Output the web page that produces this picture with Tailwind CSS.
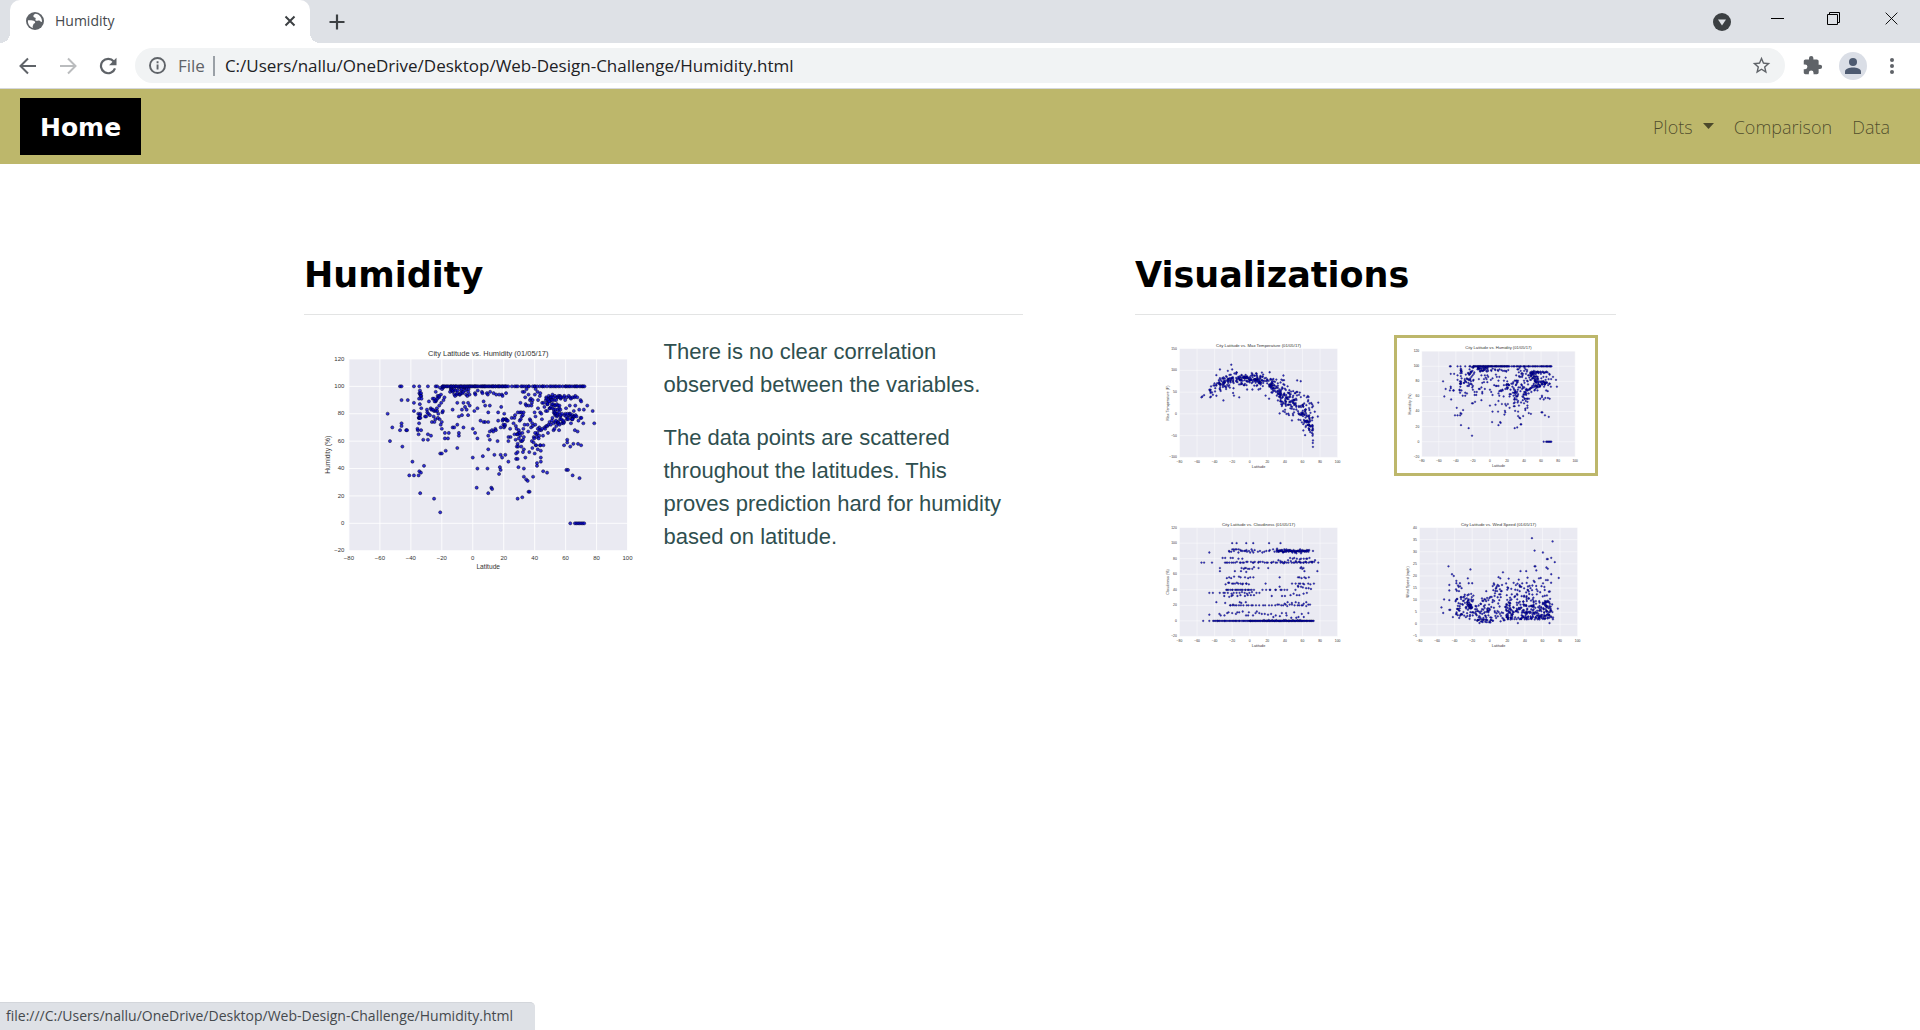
<!DOCTYPE html>
<html lang="en">
<head>
<meta charset="utf-8">
<title>Humidity</title>
<script src="https://cdn.jsdelivr.net/npm/@tailwindcss/browser@4"></script>
</head>
<body class="flex min-h-screen flex-col bg-white font-['Open_Sans','Noto_Sans',sans-serif]">

<!-- Tab strip -->
<div class="flex h-[43px] bg-[#dee1e6] pl-[10px]">
  <div class="relative flex w-[300px] items-center rounded-t-[10px] bg-white pr-[14px] pb-[2px] pl-4 text-[14px] text-[#45494d]">
    <span class="absolute bottom-0 -left-[10px] size-[10px] bg-[radial-gradient(circle_at_0_0,#dee1e6_10px,white_10px)]"></span>
    <span class="absolute -right-[10px] bottom-0 size-[10px] bg-[radial-gradient(circle_at_100%_0,#dee1e6_10px,white_10px)]"></span>
    <svg class="size-[18px]" viewBox="0 0 18 18"><circle cx="9" cy="9" r="9" fill="#5f6368"/><path fill="#fff" d="M9.5 1.7C8 2.500 7 3.300 7.500 4.800C7.800 5.800 9.500 5.200 9.700 6.300C9.900 7.200 9 7.600 9.600 8.500C10.300 9.300 11.800 8.200 13 8.500C14.500 8.900 14.500 10.300 16 9.800C16.300 6 13.500 2 9.500 1.700ZM2 8.300C4 8.200 7.500 8.200 8.600 9.200C9.700 10 9.200 11.300 8 11.500C7 11.700 7.600 13.300 6.700 14C6.500 14.800 6.700 15.500 7 16C3.800 15.200 1.400 11.900 2 8.300Z"/></svg>
    <span class="ml-[11px] grow">Humidity</span>
    <button aria-label="Close tab"><svg class="size-3" viewBox="0 0 12 12" fill="none" stroke="#3c4043" stroke-width="2"><path d="M1.500 1.500l9 9M10.500 1.500l-9 9"/></svg></button>
  </div>
  <button class="ml-[19px]" aria-label="New tab"><svg class="size-4" viewBox="0 0 16 16" fill="none" stroke="#3c4043" stroke-width="2.200"><path d="M8 .5v15M.5 8h15"/></svg></button>
  <div class="ml-auto flex pr-[22px]">
    <button aria-label="Search tabs"><svg class="size-[18px]" viewBox="0 0 18 18"><circle cx="9" cy="9" r="9" fill="#3c4043"/><path d="M5 6.500h8l-4 6z" fill="#dee1e6"/></svg></button>
    <button class="mb-[6px] ml-10" aria-label="Minimize"><svg class="size-[13px]" viewBox="0 0 13 13"><path d="M0 6h13v1H0z"/></svg></button>
    <button class="mb-[6px] ml-[43px]" aria-label="Restore"><svg class="size-[13px]" viewBox="0 0 13 13" fill="none" stroke="#000"><path d="M.5 2.500h10v10H.5zM2.500 2.500v-2h10v10h-2"/></svg></button>
    <button class="mb-[6px] ml-[45px]" aria-label="Close"><svg class="size-[13px]" viewBox="0 0 14 14" fill="none" stroke="#000"><path d="M.7 .7l12.600 12.600M13.300 .7L.7 13.300"/></svg></button>
  </div>
</div>

<!-- Toolbar -->
<div class="flex h-[46px] items-center border-b border-[#d5d7db] pr-[25px] pl-[19px]">
  <button aria-label="Back"><svg class="size-[18px]" viewBox="0 0 18 18" fill="none" stroke="#5f6368" stroke-width="2"><path d="M17 9H2M9 1.500L1.500 9L9 16.500"/></svg></button>
  <button class="ml-[22px]" aria-label="Forward"><svg class="size-[18px]" viewBox="0 0 18 18" fill="none" stroke="#babcbe" stroke-width="2"><path d="M1 9h15M9 1.500L16.500 9L9 16.500"/></svg></button>
  <button class="ml-[22px]" aria-label="Reload"><svg class="size-[18px]" viewBox="0 0 18 18"><path d="M14.800 4.500A7.200 7.200 0 1 0 16 11.300" fill="none" stroke="#5f6368" stroke-width="2.200"/><path d="M17.500 .8v7.400h-7.400z" fill="#5f6368"/></svg></button>
  <div class="ml-[18px] flex h-[35px] grow items-center rounded-full bg-[#f1f3f4] pr-[13px] pl-[14px] text-[17px]">
    <svg class="size-[17px] shrink-0" viewBox="0 0 17 17"><circle cx="8.500" cy="8.500" r="7.500" fill="none" stroke="#5f6368" stroke-width="1.900"/><path d="M7.600 7.500h1.900v5H7.600zM7.600 4.300h1.900v1.900H7.600z" fill="#5f6368"/></svg>
    <span class="ml-3 text-[#5f6368]">File</span>
    <span class="ml-2 h-5 w-[2px] bg-[#9aa0a6]"></span>
    <input aria-label="Address" class="ml-[10px] min-w-0 grow bg-transparent text-[#202124] outline-none" value="C:/Users/nallu/OneDrive/Desktop/Web-Design-Challenge/Humidity.html">
    <button aria-label="Bookmark"><svg class="size-[21px]" viewBox="0 0 24 24" fill="#5f6368"><path d="M22 9.240l-7.190-.62L12 2 9.190 8.630 2 9.240l5.460 4.730L5.820 21 12 17.270 18.180 21l-1.630-7.030L22 9.240zM12 15.400l-3.760 2.270 1-4.280-3.320-2.880 4.380-.38L12 6.100l1.710 4.040 4.380.38-3.320 2.880 1 4.280L12 15.400z"/></svg></button>
  </div>
  <button class="ml-[17px]" aria-label="Extensions"><svg class="size-[21px]" viewBox="0 0 24 24" fill="#5f6368"><path d="M20.500 11H19V7c0-1.100-.9-2-2-2h-4V3.500a2.500 2.500 0 0 0-5 0V5H4c-1.100 0-1.990.9-1.990 2v3.800H3.500a2.700 2.700 0 0 1 0 5.400H2V20c0 1.100.9 2 2 2h3.800v-1.500a2.700 2.700 0 0 1 5.400 0V22H17c1.100 0 2-.9 2-2v-4h1.500a2.500 2.500 0 0 0 0-5z"/></svg></button>
  <button class="ml-4 flex size-7 items-end justify-center rounded-full bg-[#dadee6] pb-[6px]" aria-label="Profile"><svg class="size-4" viewBox="0 0 16 16" fill="#4d5a70"><circle cx="8" cy="4" r="4"/><path d="M0 16v-2.500C0 10.800 4.500 9.500 8 9.500s8 1.300 8 4V16z"/></svg></button>
  <button class="ml-[22px]" aria-label="Menu"><svg class="h-[18px] w-[6px]" viewBox="0 0 6 18" fill="#5f6368"><circle cx="3" cy="3" r="2"/><circle cx="3" cy="9" r="2"/><circle cx="3" cy="15" r="2"/></svg></button>
</div>

<!-- Site navigation -->
<nav class="flex h-[75px] items-center justify-between bg-[#bdb76b] pr-[30px] pl-5">
  <a href="#" class="bg-black px-5 pt-[11px] pb-[9px] font-['DejaVu_Sans',sans-serif] text-[25px] leading-[37px] font-bold text-white">Home</a>
  <div class="flex gap-5 pt-[2px] text-[18px] font-light text-black/60">
    <button class="flex items-center gap-[10px]">Plots <svg class="mb-1 h-[6px] w-[11px]" viewBox="0 0 11 6" fill="currentColor"><path d="M0 0h11L5.500 6z"/></svg></button>
    <a href="#">Comparison</a>
    <a href="#">Data</a>
  </div>
</nav>

<main class="mx-auto mt-20 flex w-full max-w-[1312px] grow gap-28">
  <section class="flex-[719] basis-0">
    <h1 class="border-b border-[#e3e4e4] pt-[11px] pb-[19px] font-['DejaVu_Sans',sans-serif] text-[35px] leading-10 font-bold">Humidity</h1>
    <div class="mt-5 grid grid-cols-2 font-['Liberation_Sans',Arial,sans-serif]">
      <svg data-chart="humidity" class="w-full" viewBox="0 0 432 288" role="img" aria-label="City Latitude vs. Humidity"></svg>
      <div class="space-y-5 pr-3 text-[22px] leading-[33px] text-[#2f4f4f]">
        <p>There is no clear correlation observed between the variables.</p>
        <p>The data points are scattered throughout the latitudes. This proves prediction hard for humidity based on latitude.</p>
      </div>
    </div>
  </section>
  <section class="flex-[481] basis-0">
    <h2 class="border-b border-[#e3e4e4] pt-[11px] pb-[19px] font-['DejaVu_Sans',sans-serif] text-[35px] leading-10 font-bold">Visualizations</h2>
    <div class="mt-5 grid grid-cols-2 gap-x-9 gap-y-[38px] pr-[18px] pl-[19px] font-['Liberation_Sans',Arial,sans-serif]">
      <a href="#"><svg data-chart="temperature" class="w-full" viewBox="0 0 432 288" role="img" aria-label="City Latitude vs. Max Temperature"></svg></a>
      <a href="#" class="border-[3px] border-[#bdb76b] pb-[3px]"><svg data-chart="humidity" class="w-full" viewBox="0 0 432 288" role="img" aria-label="City Latitude vs. Humidity"></svg></a>
      <a href="#"><svg data-chart="cloudiness" class="w-full" viewBox="0 0 432 288" role="img" aria-label="City Latitude vs. Cloudiness"></svg></a>
      <a href="#"><svg data-chart="wind" class="w-full" viewBox="0 0 432 288" role="img" aria-label="City Latitude vs. Wind Speed"></svg></a>
    </div>
  </section>
</main>

<div class="fixed bottom-0 left-0 flex h-7 items-center rounded-tr-[5px] border-t border-[#d3d6db] bg-[#dee1e6] pr-[22px] pb-[2px] pl-[6px] text-[14px] text-[#45494d]">file:///C:/Users/nallu/OneDrive/Desktop/Web-Design-Challenge/Humidity.html</div>

<script>
// Repeatable pseudo-random numbers, so the charts are the same on every load
let seed = 7;
const rnd = () => (seed = (seed * 1103515245 + 12345) % 2147483648) / 2147483648;
const norm = () => rnd() + rnd() + rnd() + rnd() - 2;
const pairs = s => s.trim().split(/\s+/).map(p => p.split(',').map(Number));
// [count, lat from, lat to, value from, value to]
const fill = blocks => blocks.flatMap(([n, a, b, c, d]) =>
  Array.from({length: n}, (_, i) => [a + (i + rnd()) / n * (b - a), Math.round(c + rnd() * (d - c))]));

const humidity = [
  ...pairs(`-55,80 -52,70 -53.5,60 -46,90 -42,90 -46,73 -46,71 -47,68 -43,68 -42.500,68 -45.500,56 -39,45 -31.500,42 -34.500,38
  -33.500,37 -41,35 -38,35 -35,35 -34,22 -25,18 -21,8 -38,82 -38,88 -32,61 -29,61 -35,65 -35.500,68 -21,51 -20,51
  -17.500,53 -10,55 -18,62 -16,62 -18,66 -15.500,66 -27,64 -29,65 0,48 6.500,49 10,54 14,50 18,50 21,50 19,48 23,45 3,40
  9.500,40 17.500,41 18,39 17,36 2.500,26 12,26 12.500,25 10,22 29,18 32,19 36,23 36.700,23 33,34 34.500,32 35.500,31 39,34
  33,40 29.500,41 41.500,42 41.500,44 44,45 44,48 34,48 28,47 29,47 28,51 29,52 36.500,52 40,51 44,53 42,54 38.500,55
  33,54 45.500,38 48,37 60.500,39 61.500,39 64.500,35 69,33 63,0 66,0 67,0 68,0 69,0 70,0 71,0 72,0 74,86 77.500,82
  78.500,73 70,57 68,58 65,58 63,56 59,57 61,59 61,61 -47,100 -46,100 -38,100 -34.500,100 -29,100 -25,82 -24,82 -23,82
  -13,70 -12,70 -10,72 -6,70 -9,66 -9,64 0,69 1.500,66 3,62 10,64 11,61 16,60 23,60 29,58 -9,78 -7,79 -3,79 -20,69 -20,74
  -4,83 -2,86 1,82 3,84 7,89 8,86 11,86 10,81 8,74 10,74 5,75 7,74 -13,83 -10,88 -6,88 -3,88 -5,85 -7,83 -24,100 -23,100`),
  ...fill([[6,-36,-33,65,80],[14,-35,-33,76,99],[24,-31,-19,72,92],[15,-26,-18,88,99],[30,-15,-2,93,99],[14,0,22,93,98],
  [62,-20,23,100,100],[28,25,60,100,100],[14,60,73,100,100],[10,11,20,66,86],[10,19,22,68,80],[15,22,33,60,82],
  [32,29,45,62,88],[14,27,33,52,78],[24,32,52,84,99],[17,38,46,56,72],[17,46,56,66,80],[38,47,57,82,94],[20,52,58,71,82],
  [18,58,66,73,80],[12,56,68,91,93],[14,58,72,62,90],[8,64,72,72,84]])];

const means = [[-56,36],[-45,54],[-35,68],[-25,76],[-10,77],[0,80],[15,78],[25,70],[32,55],[40,38],[50,26],[60,6],[66,-5],[72,-38]];
const meanAt = lat => {
  const i = Math.max(1, means.findIndex(m => m[0] >= lat));
  const [a, u] = means[i - 1], [b, v] = means[i];
  return u + (v - u) * (lat - a) / (b - a);
};
const temps = [
  ...pairs(`-55,38 -54,40 -52,43 -45,38 -42,44 -30,31 -19,48 -18,42 -12,38 -21,113 -20,102 -34,102 -25,99 -38,89 -15,95 54,77 58,75
  78,26 77.500,-6 34,1 38,6 48,-15 22,35 72,-61 63,-49 61,-38 71.500,-50 66,41 57,49 74,5 18,42 10,56 12,58 -3,56 3,56
  65,38 67,39 70,25 71,22 68,24 72,18 71,15 60,20 62,24`),
  ...Array.from({length: 480}, (_, i) => {
    const lat = i < 25 ? -46 + rnd() * 14 : i < 220 ? -35 + rnd() * 58 : 22 + rnd() * 50;
    return [lat, meanAt(lat) + norm() * (lat < 22 ? 13 : lat < 32 ? 17 : 29)];
  })];

const clouds = [
  ...pairs(`-20,100 -15,100 -4,100 4,100 22,100 35,100 -46,88 -55,75 -52,75 -43,75 78,75 77,64 -34,64 -34,68 -46,36 -42,36
  -38,24 -46,8 -53,0 -46,0 72,90 73,48 18,48 34,56 34,44 25,32 21,68 10,68 11,36 -4,63 -17,64 -10,64`),
  ...fill([[22,-25,5,88,92],[10,5,30,88,92],[60,30,68,89,91],[14,30,62,87,93],[50,-30,75,75,76],[14,30,75,74,78],[6,-35,-5,80,81],
  [10,45,70,79,81],[8,-10,5,67,69],[5,57,63,63,69],[10,-28,5,55,57],[6,54,68,55,57],[14,-28,0,47,49],[8,48,70,47,49],
  [20,-28,5,40,40],[10,14,45,40,40],[8,50,70,39,46],[14,-35,8,35,37],[10,-30,5,31,33],[8,36,66,31,37],[8,-28,0,20,25],
  [16,-25,30,20,20],[16,30,70,19,21],[7,38,66,22,25],[20,-36,22,7,12],[14,22,68,3,13],[40,-42,2,0,0],[100,0,73,0,0],[20,15,60,0,1]])];

const winds = [
  ...pairs(`-47,24 -43,20.700 -41,20 -46,16.300 -46,14 -55,7 -53,4.700 -52,10.300 -46,10 -46,6 -45,6 -42,3 -22,22.700 -25,19 -24,17 -20,17
  15,21.500 48,35.600 71.500,34.300 51,30.500 60.500,29.700 70,27.500 66,27 65,27 74,25.700 51,24 52,24 53,22.300 64.500,23.500 66,23
  35,22 41.500,22 70,20.700 78.500,19.200 77.500,6.500 43,19.300 56,19 58,19.200 66,18.300 64,18.300 -38,18 -38,17 -34,17 10,19.500
  12,19 33,18.500 50,18 51,17.500 68,0.500 32,0.500 -4,13.700 5,16.400`),
  ...fill([[32,-39,-32,3,16],[42,-32,-18,2,14],[24,-26,-20,6,10],[70,-17,2,1,8],[12,-10,4,9,11],[24,3,14,9,17],[22,3,18,1,7]]).map(([a, b]) => [a, b + rnd() - .5]),
  ...Array.from({length: 320}, () => [18 + rnd() * 54, 2 + Math.abs(norm()) * 6.500 + (rnd() < .3 ? rnd() * 11 : 0)])];

const charts = {
  humidity: {title: 'Humidity', label: 'Humidity (%)', min: -20, max: 120, step: 20, data: humidity},
  temperature: {title: 'Max Temperature', label: 'Max Temperature (F)', min: -100, max: 150, step: 50, data: temps},
  cloudiness: {title: 'Cloudiness', label: 'Cloudiness (%)', min: -20, max: 120, step: 20, data: clouds},
  wind: {title: 'Wind Speed', label: 'Wind Speed (mph)', min: -5, max: 40, step: 5, data: winds},
};

document.querySelectorAll('[data-chart]').forEach(svg => {
  const c = charts[svg.dataset.chart];
  const X = lat => 54 + (lat + 80) * 1.86;
  const Y = v => 259.2 - (v - c.min) / (c.max - c.min) * 230.4;
  const minus = v => String(v).replace('-', '−');
  let out = '<rect x="54" y="28.8" width="334.8" height="230.4" fill="#eaeaf2"/><g font-size="7.2" fill="#333">';
  for (let v = -80; v <= 100; v += 20)
    out += `<path d="M${X(v)} 28.8V259.2" stroke="#fff"/><text x="${X(v)}" y="270" text-anchor="middle">${minus(v)}</text>`;
  for (let v = c.min; v <= c.max; v += c.step)
    out += `<path d="M54 ${Y(v)}H388.8" stroke="#fff"/><text x="48.5" y="${Y(v) + 2}" text-anchor="end">${minus(v)}</text>`;
  out += '</g><g fill="#0000d0" fill-opacity=".8" stroke="#00001a" stroke-opacity=".65" stroke-width=".8">';
  for (const [lat, v] of c.data) out += `<circle cx="${X(lat).toFixed(1)}" cy="${Y(v).toFixed(1)}" r="1.9"/>`;
  out += `</g><g font-size="8" fill="#333" text-anchor="middle"><text x="221.4" y="25" font-size="9">City Latitude vs. ${c.title} (01/05/17)</text>
    <text x="221.4" y="281">Latitude</text><text transform="translate(31 144) rotate(-90)">${c.label}</text></g>`;
  svg.innerHTML = out;
});
</script>
</body>
</html>
